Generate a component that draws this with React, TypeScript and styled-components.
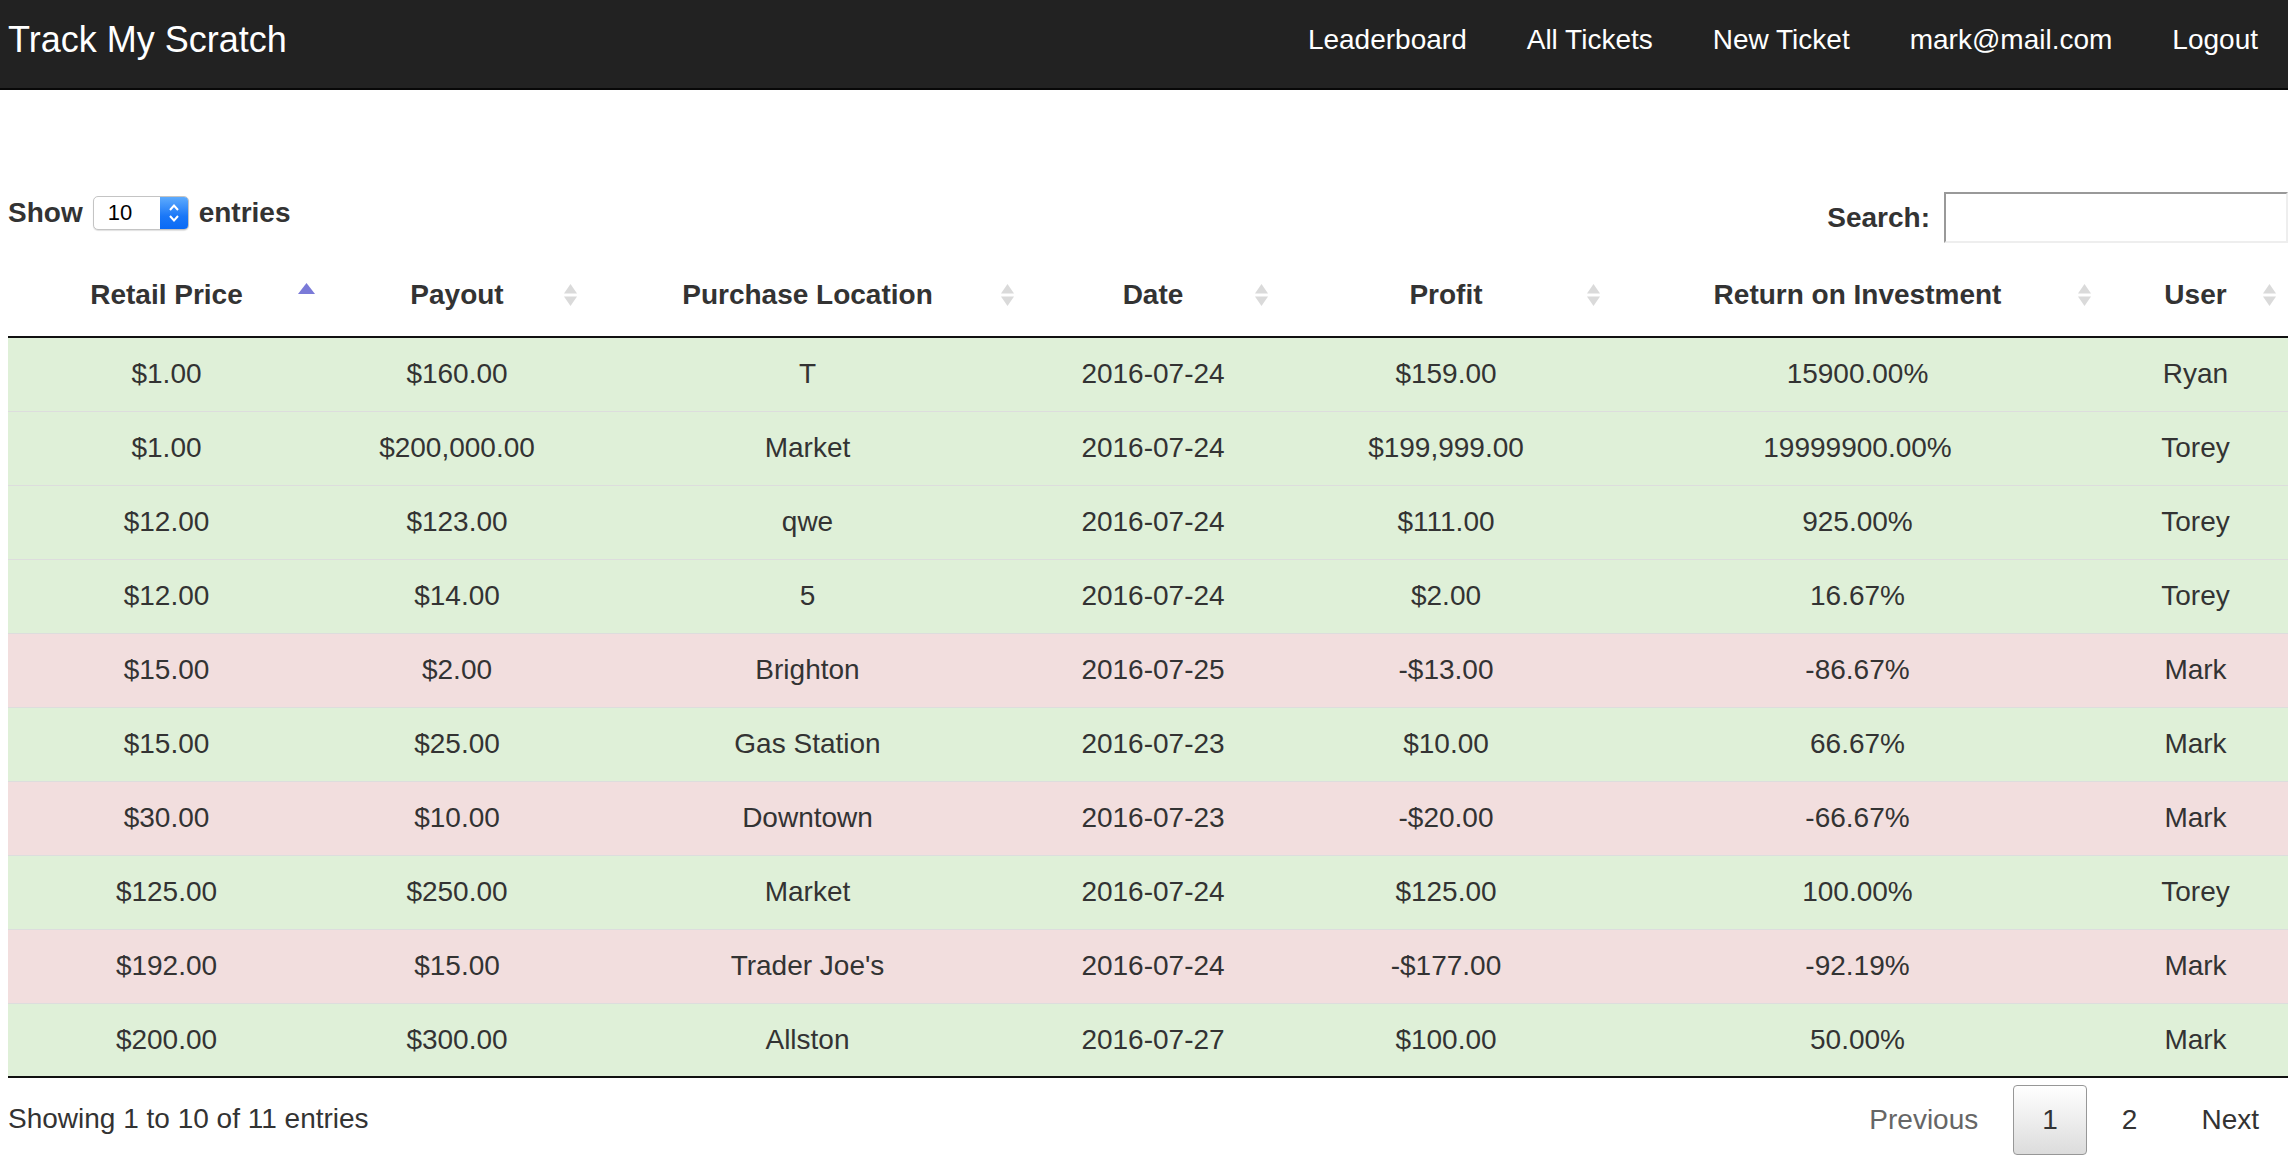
import React from "react";
import styled, { createGlobalStyle } from "styled-components";

const GlobalStyle = createGlobalStyle`
  html, body {
    margin: 0;
    padding: 0;
    background: #ffffff;
  }
  body {
    font-family: "Liberation Sans", Arial, Helvetica, sans-serif;
    color: #333333;
    font-size: 28px;
    line-height: 40px;
    overflow: hidden;
  }
`;

const NavBar = styled.nav`
  display: flex;
  align-items: center;
  justify-content: space-between;
  height: 80px;
  padding-bottom: 8px;
  background: #222222;
  border-bottom: 2px solid #080808;
`;

const Brand = styled.a`
  padding-left: 8px;
  font-size: 36px;
  line-height: 40px;
  color: #ffffff;
  text-decoration: none;
`;

const NavLinks = styled.div`
  display: flex;
  align-items: center;
`;

const NavLink = styled.a`
  padding: 0 30px;
  font-size: 28px;
  line-height: 40px;
  color: #ffffff;
  text-decoration: none;
  white-space: nowrap;
`;

const Main = styled.main`
  padding-left: 8px;
`;

const Controls = styled.div`
  display: flex;
  justify-content: space-between;
  align-items: flex-start;
  margin-top: 102px;
  height: 51px;
`;

const LengthControl = styled.label`
  display: flex;
  align-items: center;
  gap: 10px;
  height: 34px;
  margin-top: 4px;
  font-weight: bold;
`;

const SelectBox = styled.div`
  display: flex;
  width: 96px;
  height: 34px;
  box-sizing: border-box;
  border: 1px solid #c4c4c4;
  border-radius: 5px;
  overflow: hidden;
  background: #ffffff;
  box-shadow: 0 1px 1px rgba(0, 0, 0, 0.12);
`;

const SelectValue = styled.span`
  flex: 1;
  padding-left: 14px;
  font-size: 22px;
  line-height: 32px;
  font-weight: normal;
  color: #000000;
`;

const Stepper = styled.span`
  display: flex;
  align-items: center;
  justify-content: center;
  width: 28px;
  background: linear-gradient(to bottom, #5eabfd 0%, #1a77f7 60%, #0a6af5 100%);
`;

const SearchControl = styled.label`
  display: flex;
  align-items: center;
  height: 51px;
  font-weight: bold;
`;

const SearchInput = styled.input`
  width: 344px;
  height: 51px;
  box-sizing: border-box;
  margin-left: 14px;
  border-style: solid;
  border-width: 2px;
  border-color: #999999 #eeeeee #eeeeee #999999;
  background: #ffffff;
  outline: none;
  font: inherit;
`;

const Table = styled.table`
  width: 100%;
  margin-top: 10px;
  border-collapse: collapse;
  table-layout: fixed;
  border-bottom: 2px solid #111111;
`;

const HeadCell = styled.th`
  height: 84px;
  box-sizing: border-box;
  padding: 0 10px;
  border-bottom: 2px solid #111111;
  font-weight: bold;
  text-align: center;
  white-space: nowrap;
`;

const HeadInner = styled.div`
  display: grid;
  grid-template-columns: 1fr auto 1fr;
  align-items: center;
`;

const HeadLabel = styled.span`
  grid-column: 2;
`;

const SortSlot = styled.span`
  grid-column: 3;
  justify-self: end;
  display: flex;
  align-items: center;
`;

const Row = styled.tr<{ $tone: "success" | "danger" }>`
  background: ${(p) => (p.$tone === "success" ? "#dff0d8" : "#f2dede")};
`;

const Cell = styled.td`
  height: 74px;
  box-sizing: border-box;
  padding: 0 10px;
  border-top: 1px solid #dddddd;
  text-align: center;
  vertical-align: middle;
  white-space: nowrap;
`;

const Footer = styled.div`
  display: flex;
  justify-content: space-between;
  align-items: flex-start;
`;

const Info = styled.div`
  padding-top: 21px;
`;

const Paginate = styled.div`
  display: flex;
  gap: 6px;
  padding-top: 7px;
`;

const PageButton = styled.a<{ $current?: boolean; $disabled?: boolean }>`
  display: block;
  padding: 14px 28px;
  border: 1px solid ${(p) => (p.$current ? "#979797" : "transparent")};
  border-radius: 4px;
  line-height: 40px;
  text-align: center;
  text-decoration: none;
  color: ${(p) => (p.$disabled ? "#666666" : "#333333")};
  background: ${(p) =>
    p.$current ? "linear-gradient(to bottom, #ffffff 0%, #dcdcdc 100%)" : "transparent"};
`;

type SortState = "asc" | "both";

const SortIcon = ({ state }: { state: SortState }) =>
  state === "asc" ? (
    <svg width="17" height="24" viewBox="0 0 17 24">
      <polygon points="8.5,0 17,11 0,11" fill="#7a7ad8" />
    </svg>
  ) : (
    <svg width="17" height="24" viewBox="0 0 17 24">
      <polygon points="8.5,1 15,10.5 2,10.5" fill="#dadada" />
      <polygon points="2,13.5 15,13.5 8.5,23" fill="#dadada" />
    </svg>
  );

const StepperIcon = () => (
  <svg width="12" height="22" viewBox="0 0 12 22">
    <polyline points="2,8 6,3.5 10,8" fill="none" stroke="#ffffff" strokeWidth="2" />
    <polyline points="2,14 6,18.5 10,14" fill="none" stroke="#ffffff" strokeWidth="2" />
  </svg>
);

const columns: { label: string; width: number; sort: SortState }[] = [
  { label: "Retail Price", width: 317, sort: "asc" },
  { label: "Payout", width: 264, sort: "both" },
  { label: "Purchase Location", width: 437, sort: "both" },
  { label: "Date", width: 254, sort: "both" },
  { label: "Profit", width: 332, sort: "both" },
  { label: "Return on Investment", width: 491, sort: "both" },
  { label: "User", width: 185, sort: "both" },
];

const rows: { cells: string[]; tone: "success" | "danger" }[] = [
  { cells: ["$1.00", "$160.00", "T", "2016-07-24", "$159.00", "15900.00%", "Ryan"], tone: "success" },
  { cells: ["$1.00", "$200,000.00", "Market", "2016-07-24", "$199,999.00", "19999900.00%", "Torey"], tone: "success" },
  { cells: ["$12.00", "$123.00", "qwe", "2016-07-24", "$111.00", "925.00%", "Torey"], tone: "success" },
  { cells: ["$12.00", "$14.00", "5", "2016-07-24", "$2.00", "16.67%", "Torey"], tone: "success" },
  { cells: ["$15.00", "$2.00", "Brighton", "2016-07-25", "-$13.00", "-86.67%", "Mark"], tone: "danger" },
  { cells: ["$15.00", "$25.00", "Gas Station", "2016-07-23", "$10.00", "66.67%", "Mark"], tone: "success" },
  { cells: ["$30.00", "$10.00", "Downtown", "2016-07-23", "-$20.00", "-66.67%", "Mark"], tone: "danger" },
  { cells: ["$125.00", "$250.00", "Market", "2016-07-24", "$125.00", "100.00%", "Torey"], tone: "success" },
  { cells: ["$192.00", "$15.00", "Trader Joe's", "2016-07-24", "-$177.00", "-92.19%", "Mark"], tone: "danger" },
  { cells: ["$200.00", "$300.00", "Allston", "2016-07-27", "$100.00", "50.00%", "Mark"], tone: "success" },
];

export default function App() {
  return (
    <>
      <GlobalStyle />
      <NavBar>
        <Brand href="#">Track My Scratch</Brand>
        <NavLinks>
          <NavLink href="#">Leaderboard</NavLink>
          <NavLink href="#">All Tickets</NavLink>
          <NavLink href="#">New Ticket</NavLink>
          <NavLink href="#">mark@mail.com</NavLink>
          <NavLink href="#">Logout</NavLink>
        </NavLinks>
      </NavBar>
      <Main>
        <Controls>
          <LengthControl>
            <span>Show</span>
            <SelectBox>
              <SelectValue>10</SelectValue>
              <Stepper>
                <StepperIcon />
              </Stepper>
            </SelectBox>
            <span>entries</span>
          </LengthControl>
          <SearchControl>
            Search:
            <SearchInput type="search" />
          </SearchControl>
        </Controls>
        <Table>
          <colgroup>
            {columns.map((c) => (
              <col key={c.label} style={{ width: c.width }} />
            ))}
          </colgroup>
          <thead>
            <tr>
              {columns.map((c) => (
                <HeadCell key={c.label}>
                  <HeadInner>
                    <HeadLabel>{c.label}</HeadLabel>
                    <SortSlot>
                      <SortIcon state={c.sort} />
                    </SortSlot>
                  </HeadInner>
                </HeadCell>
              ))}
            </tr>
          </thead>
          <tbody>
            {rows.map((r, i) => (
              <Row key={i} $tone={r.tone}>
                {r.cells.map((v, j) => (
                  <Cell key={j}>{v}</Cell>
                ))}
              </Row>
            ))}
          </tbody>
        </Table>
        <Footer>
          <Info>Showing 1 to 10 of 11 entries</Info>
          <Paginate>
            <PageButton $disabled>Previous</PageButton>
            <PageButton $current>1</PageButton>
            <PageButton>2</PageButton>
            <PageButton>Next</PageButton>
          </Paginate>
        </Footer>
      </Main>
    </>
  );
}
